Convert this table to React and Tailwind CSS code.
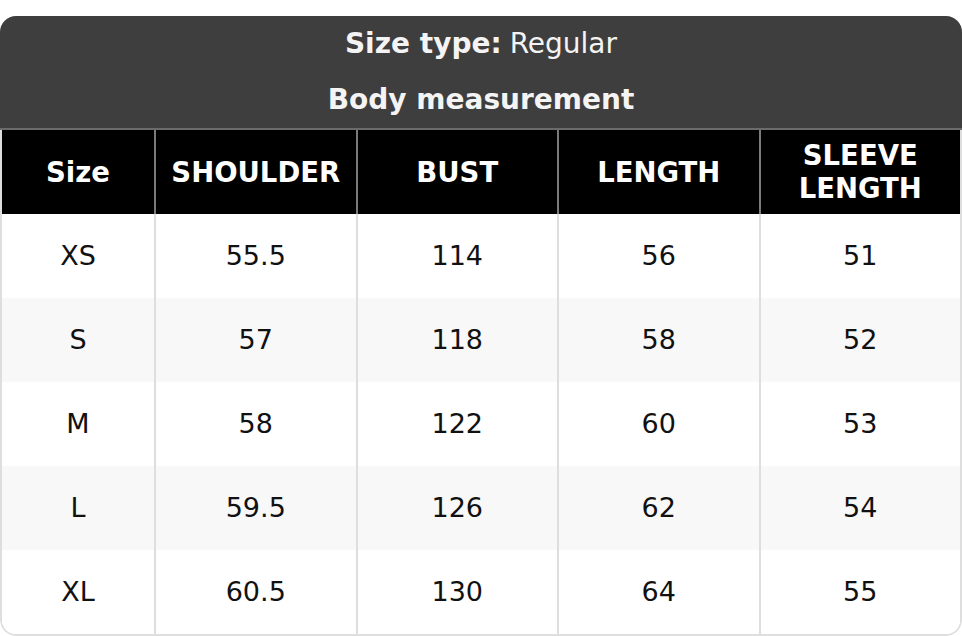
const columns = ['Size', 'SHOULDER', 'BUST', 'LENGTH', 'SLEEVE LENGTH']

const rows = [
    ['XS', '55.5', '114', '56', '51'],
    ['S', '57', '118', '58', '52'],
    ['M', '58', '122', '60', '53'],
    ['L', '59.5', '126', '62', '54'],
    ['XL', '60.5', '130', '64', '55'],
]

export default function App() {
    return (
        <div className="min-h-screen bg-white pt-4" style={{ fontFamily: '"DejaVu Sans", sans-serif' }}>
            <div className="w-full rounded-2xl overflow-hidden">
                {/* title block */}
                <div className="bg-[#3e3e3e] text-[#f4f4f4] text-[28px] text-center border-b-2 border-[#6b6b6b]">
                    <div className="h-14 flex items-center justify-center">
                        <span className="font-bold">Size type:</span>
                        <span className="ml-2">Regular</span>
                    </div>
                    <div className="h-14 flex items-center justify-center font-bold">
                        Body measurement
                    </div>
                </div>

                <div className="border-x-2 border-b-2 border-[#dedede] rounded-b-2xl overflow-hidden">
                    <div className="grid grid-cols-[152px_repeat(4,1fr)] bg-black text-white font-bold text-[27.5px] leading-[33px]">
                        {columns.map((c, i) => (
                            <div
                                key={c}
                                className={`h-[84px] flex items-center justify-center text-center px-1 ${i > 0 ? 'border-l-2 border-[#7a7a7a]' : ''}`}
                            >
                                {c === 'SLEEVE LENGTH' ? (<span>SLEEVE<br />LENGTH</span>) : c}
                            </div>
                        ))}
                    </div>

                    {rows.map((r, ri) => (
                        <div
                            key={r[0]}
                            className={`grid grid-cols-[152px_repeat(4,1fr)] text-[27px] text-[#111] ${ri % 2 === 1 ? 'bg-[#f8f8f8]' : 'bg-white'}`}
                        >
                            {r.map((v, i) => (
                                <div
                                    key={i}
                                    className={`h-[84px] flex items-center justify-center ${i > 0 ? 'border-l-2 border-[#dedede]' : ''}`}
                                >
                                    {v}
                                </div>
                            ))}
                        </div>
                    ))}
                </div>
            </div>
        </div>
    )
}
